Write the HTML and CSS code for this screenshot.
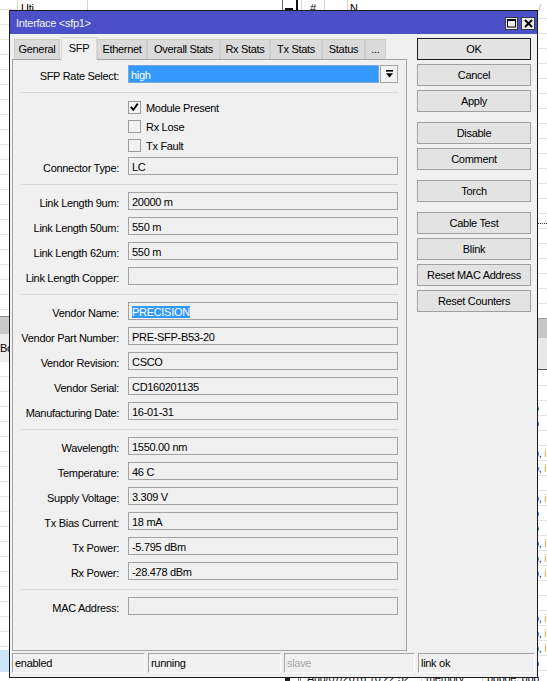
FILE: index.html
```html
<!DOCTYPE html>
<html>
<head>
<meta charset="utf-8">
<title>Interface &lt;sfp1&gt;</title>
<link rel="stylesheet" href="styles.css">
</head>
<body>
<div class="desk">

  <div class="bgwin bg-left">
    <div class="lhead">
      <div class="hc hc0"></div>
      <div class="hc hc1">Uti</div>
      <div class="hc hc2"></div>
      <div class="hc hc3"><span class="sblk"></span></div>
    </div>
    <div class="lrows lrows1"></div>
    <div class="lband"></div>
    <div class="lbo">Bo</div>
    <div class="lrows lrows2"></div>
    <div class="lsel"></div>
    <div class="lfoot"><span class="sq"></span></div>
  </div>

  <div class="bgwin bg-right">
    <div class="rhead">
      <div class="rh rh0"></div>
      <div class="rh rh1">#</div>
      <div class="rh rh2"></div>
      <div class="rh rh3">N</div>
      <div class="rh rh4">/</div>
    </div>
    <div class="rlist"></div>
    <div class="rband1"></div>
    <div class="rband2"></div>
    <div class="rlog">
      <div class="lrow"><span class="lt"></span><span class="lm"></span><span class="lx"></span><span class="ly"></span></div>
      <div class="lrow"><span class="lt"></span><span class="lm"></span><span class="lx"></span><span class="ly"></span></div>
      <div class="lrow"><span class="lt"></span><span class="lm"></span><span class="lx"></span><span class="ly">o</span></div>
      <div class="lrow"><span class="lt"></span><span class="lm"></span><span class="lx"></span><span class="ly">o</span></div>
      <div class="lrow"><span class="lt"></span><span class="lm"></span><span class="lx"></span><span class="ly"></span></div>
      <div class="lrow"><span class="lt"></span><span class="lm"></span><span class="lx"></span><span class="ly">o, <span class="or">i</span></span></div>
      <div class="lrow"><span class="lt"></span><span class="lm"></span><span class="lx"></span><span class="ly">o, <span class="or">i</span></span></div>
      <div class="lrow"><span class="lt"></span><span class="lm"></span><span class="lx"></span><span class="ly"></span></div>
      <div class="lrow"><span class="lt"></span><span class="lm"></span><span class="lx"></span><span class="ly">o, <span class="or">i</span></span></div>
      <div class="lrow"><span class="lt"></span><span class="lm"></span><span class="lx"></span><span class="ly">o</span></div>
      <div class="lrow"><span class="lt"></span><span class="lm"></span><span class="lx"></span><span class="ly">o</span></div>
      <div class="lrow"><span class="lt"></span><span class="lm"></span><span class="lx"></span><span class="ly">o, <span class="or">i</span></span></div>
      <div class="lrow"><span class="lt"></span><span class="lm"></span><span class="lx"></span><span class="ly">o, <span class="or">i</span></span></div>
      <div class="lrow"><span class="lt"></span><span class="lm"></span><span class="lx"></span><span class="ly">o, <span class="or">i</span></span></div>
      <div class="lrow"><span class="lt"></span><span class="lm"></span><span class="lx"></span><span class="ly"></span></div>
      <div class="lrow"><span class="lt"></span><span class="lm"></span><span class="lx"></span><span class="ly"></span></div>
      <div class="lrow"><span class="lt"></span><span class="lm"></span><span class="lx"></span><span class="ly">o, <span class="or">i</span></span></div>
      <div class="lrow"><span class="lt"></span><span class="lm"></span><span class="lx"></span><span class="ly">o, <span class="or">i</span></span></div>
      <div class="lrow"><span class="lt"></span><span class="lm"></span><span class="lx"></span><span class="ly">o, <span class="or">i</span></span></div>
      <div class="lrow"><span class="lt"></span><span class="lm"></span><span class="lx"></span><span class="ly">o</span></div>
      <div class="lrow"><span class="lt">Aug/07/2016 10:22:52</span><span class="lm">memory</span><span class="lx">pppoe, ppp</span><span class="ly"></span></div>
    </div>
  </div>

  <div class="win">
    <div class="titlebar">
      <span class="title">Interface &lt;sfp1&gt;</span>
      <span class="tbtn">
        <svg width="11" height="11" viewBox="0 0 11 11"><rect x="1.5" y="1.5" width="8" height="7.5" fill="none" stroke="#000" stroke-width="1"/><rect x="1" y="1" width="9" height="2" fill="#000"/></svg>
      </span>
      <span class="tbtn tclose">
        <svg width="11" height="11" viewBox="0 0 11 11"><path d="M2 2L9 9M9 2L2 9" stroke="#000" stroke-width="2" fill="none"/></svg>
      </span>
    </div>

    <div class="body">
      <div class="top">
        <div class="main">
          <div class="tabs">
            <div class="tab t-general">General</div>
            <div class="tab t-sfp active">SFP</div>
            <div class="tab t-eth">Ethernet</div>
            <div class="tab t-overall">Overall Stats</div>
            <div class="tab t-rx">Rx Stats</div>
            <div class="tab t-tx">Tx Stats</div>
            <div class="tab t-status">Status</div>
            <div class="tab t-more">...</div>
          </div>

          <div class="panel">
            <div class="row">
              <span class="lbl">SFP Rate Select:</span>
              <div class="combo">
                <div class="field sel">high</div>
                <div class="ddbtn"><svg width="9" height="9" viewBox="0 0 9 9"><rect x="1" y="0" width="7" height="1.6" fill="#000"/><path d="M1 3.2H8L4.5 7.6Z" fill="#000"/></svg></div>
              </div>
            </div>
            <div class="sep"></div>

            <div class="checks">
              <div class="chk"><span class="box"><svg width="11" height="11" viewBox="0 0 11 11"><path d="M1.8 4.8L4.3 7.8L8.8 1.6" fill="none" stroke="#000" stroke-width="1.8"/></svg></span>Module Present</div>
              <div class="chk"><span class="box"></span>Rx Lose</div>
              <div class="chk"><span class="box"></span>Tx Fault</div>
            </div>
            <div class="row"><span class="lbl">Connector Type:</span><div class="field">LC</div></div>
            <div class="sep"></div>

            <div class="row"><span class="lbl">Link Length 9um:</span><div class="field">20000 m</div></div>
            <div class="row"><span class="lbl">Link Length 50um:</span><div class="field">550 m</div></div>
            <div class="row"><span class="lbl">Link Length 62um:</span><div class="field">550 m</div></div>
            <div class="row"><span class="lbl">Link Length Copper:</span><div class="field"></div></div>
            <div class="sep"></div>

            <div class="row"><span class="lbl">Vendor Name:</span><div class="field"><span class="hl">PRECISION</span></div></div>
            <div class="row"><span class="lbl">Vendor Part Number:</span><div class="field">PRE-SFP-B53-20</div></div>
            <div class="row"><span class="lbl">Vendor Revision:</span><div class="field">CSCO</div></div>
            <div class="row"><span class="lbl">Vendor Serial:</span><div class="field">CD160201135</div></div>
            <div class="row"><span class="lbl">Manufacturing Date:</span><div class="field">16-01-31</div></div>
            <div class="sep"></div>

            <div class="row"><span class="lbl">Wavelength:</span><div class="field">1550.00 nm</div></div>
            <div class="row"><span class="lbl">Temperature:</span><div class="field">46 C</div></div>
            <div class="row"><span class="lbl">Supply Voltage:</span><div class="field">3.309 V</div></div>
            <div class="row"><span class="lbl">Tx Bias Current:</span><div class="field">18 mA</div></div>
            <div class="row"><span class="lbl">Tx Power:</span><div class="field">-5.795 dBm</div></div>
            <div class="row"><span class="lbl">Rx Power:</span><div class="field">-28.478 dBm</div></div>
            <div class="sep"></div>

            <div class="row"><span class="lbl">MAC Address:</span><div class="field"></div></div>
          </div>
        </div>

        <div class="side">
          <div class="grp">
            <div class="btn def">OK</div>
            <div class="btn">Cancel</div>
            <div class="btn">Apply</div>
          </div>
          <div class="grp">
            <div class="btn">Disable</div>
            <div class="btn">Comment</div>
          </div>
          <div class="grp">
            <div class="btn">Torch</div>
          </div>
          <div class="grp">
            <div class="btn">Cable Test</div>
            <div class="btn">Blink</div>
            <div class="btn">Reset MAC Address</div>
            <div class="btn">Reset Counters</div>
          </div>
        </div>
      </div>

      <div class="status">
        <div class="scell">enabled</div>
        <div class="scell">running</div>
        <div class="scell dim">slave</div>
        <div class="scell last">link ok</div>
      </div>
    </div>
  </div>

</div>
</body>
</html>
```

FILE: styles.css
```css
* { box-sizing: border-box; }
html, body { margin: 0; padding: 0; }
body {
  width: 547px;
  height: 681px;
  overflow: hidden;
  background: #fff;
  font-family: "Liberation Sans", Arial, sans-serif;
  font-size: 11px;
  letter-spacing: -0.3px;
  color: #000;
}
.desk {
  position: relative;
  width: 547px;
  height: 681px;
  overflow: hidden;
  background: #fff;
}

/* ---------- background windows ---------- */
.bgwin {
  position: absolute;
  top: 0;
  height: 681px;
  display: flex;
  flex-direction: column;
  background: #fff;
}
.bg-left { left: 0; width: 296px; }
.bg-right { left: 296px; width: 251px; }

.lhead { height: 10px; flex: none; display: flex; background: #fff; }
.lhead .hc {
  height: 10px;
  border-right: 1px solid #d6d6d6;
  padding: 2px 0 0 3px;
  line-height: 13px;
  white-space: nowrap;
}
.hc0 { width: 18px; border-bottom: 1px solid #e2e2e2; }
.hc1 { width: 70px; }
.hc2 { flex: 1; border-right-color: #6a6a6a !important; }
.hc3 { width: 13px; border-right: none !important; padding: 0 !important; }
.sblk { display: block; width: 8px; height: 2px; margin: 8px 0 0 2px; background: #111; }

.lrows {
  flex: none;
  background: repeating-linear-gradient(180deg, transparent 0 14px, #e4e4e4 14px 15px);
}
.lrows1 { height: 306px; }
.lband { flex: none; height: 18px; background: #c9c9c9; border-top: 1px solid #8a8a8a; }
.lbo { flex: none; height: 28px; line-height: 28px; background: #ececec; white-space: nowrap; }
.lrows2 { height: 288px; }
.lsel { flex: none; height: 22px; background: #cce4f7; }
.lfoot { flex: none; height: 9px; display: flex; justify-content: flex-end; padding-right: 6px; }
.sq { display: block; width: 5px; height: 5px; margin-top: 6px; background: #222; }

.rhead { height: 10px; flex: none; display: flex; border-left: 2px solid #111; }
.rh {
  height: 10px;
  border-right: 1px solid #d6d6d6;
  padding: 2px 0 0 3px;
  line-height: 13px;
  white-space: nowrap;
}
.rh0 { width: 4px; padding: 0; }
.rh1 { width: 23px; padding-left: 8px; }
.rh2 { width: 23px; }
.rh3 { width: 190px; border-right: none; padding-left: 2px; }
.rh4 { flex: 1; border-right: none; color: #b8b8b8; padding-left: 0; }

.rlist {
  flex: none;
  height: 308px;
  background:
    repeating-linear-gradient(90deg, #333 0 1px, transparent 1px 2px) 0 213px / 100% 1px no-repeat,
    repeating-linear-gradient(180deg, transparent 0 8px, #e4e4e4 8px 9px, transparent 9px 15px);
}
.rband1 { flex: none; height: 20px; background: #c6c6c6; border-top: 1px solid #a0a0a0; }
.rband2 { flex: none; height: 32px; background: #e9e9e9; border-bottom: 1px solid #555; }
.rlog { flex: none; display: flex; flex-direction: column; }
.lrow {
  flex: none;
  height: 15px;
  display: flex;
  margin-left: 2px;
  border-left: 3px double #8c8c8c;
  border-top: 1px solid #e4e4e4;
  line-height: 13px;
  white-space: nowrap;
  color: #111;
}
.lrow:first-child { border-top: none; }
.lt { flex: none; width: 121px; padding: 1px 0 0 6px; border-right: 1px solid #dcdcdc; }
.lm { flex: none; width: 61px; padding: 1px 0 0 4px; border-right: 1px solid #dcdcdc; }
.lx { flex: none; width: 50px; padding: 1px 0 0 4px; }
.ly { flex: none; padding: 1px 0 0 0; color: #1c2aa8; }
.or { color: #eda526; }

/* ---------- dialog window ---------- */
.win {
  position: absolute;
  left: 9px;
  top: 10px;
  width: 529px;
  height: 668px;
  border: 1px solid #1c1c1c;
  background: #f0f0f0;
  display: flex;
  flex-direction: column;
}
.titlebar {
  flex: none;
  height: 23px;
  background: #4b4fc8;
  display: flex;
  align-items: center;
  padding: 1px 2px 0 6px;
  gap: 3px;
}
.title {
  flex: 1;
  color: #f4f4f4;
  white-space: nowrap;
}
.tbtn {
  width: 13px;
  height: 13px;
  border: 1px solid #3a3a3a;
  background: #ececec;
  display: flex;
  align-items: center;
  justify-content: center;
}
.tclose { width: 14px; }

.body {
  flex: 1;
  display: flex;
  flex-direction: column;
  padding: 3px 2px 4px 2px;
}
.top { flex: none; display: flex; height: 614px; }
.main { flex: none; width: 395px; display: flex; flex-direction: column; }

.tabs {
  flex: none;
  height: 22px;
  display: flex;
  align-items: flex-end;
  padding-left: 2px;
  position: relative;
  z-index: 1;
}
.tab {
  flex: none;
  height: 20px;
  line-height: 19px;
  text-align: center;
  background: #dadada;
  border: 1px solid #cdcdcd;
  border-bottom: none;
  white-space: nowrap;
}
.tab.active {
  height: 23px;
  line-height: 20px;
  margin-left: 1px;
  margin-bottom: -1px;
  background: #f0f0f0;
  border-color: #d9d9d9;
}
.t-general { width: 46px; }
.t-sfp { width: 36px; }
.t-eth { width: 50px; }
.t-overall { width: 73px; }
.t-rx { width: 50px; }
.t-tx { width: 52px; }
.t-status { width: 43px; }
.t-more { width: 21px; }

.panel {
  flex: none;
  height: 592px;
  border: 1px solid #a3a3a3;
  background: #f0f0f0;
  padding: 5px 8px 0 0;
  display: flex;
  flex-direction: column;
}
.row {
  flex: none;
  height: 18px;
  margin-bottom: 7px;
  display: flex;
  align-items: flex-start;
}
.lbl {
  flex: none;
  width: 106px;
  margin-right: 9px;
  text-align: right;
  white-space: nowrap;
  line-height: 20px;
  padding-top: 1px;
}
.field {
  flex: none;
  width: 270px;
  height: 18px;
  border: 1px solid #a3a3a3;
  background: #f0f0f0;
  padding-left: 3px;
  line-height: 18px;
  white-space: nowrap;
}
.hl { background: #3399ff; color: #fff; }
.combo { flex: none; width: 270px; display: flex; gap: 1px; }
.field.sel {
  flex: 1;
  width: auto;
  background: #3399ff;
  border-color: #7fa9d8;
  color: #fff;
  padding-left: 2px;
}
.ddbtn {
  flex: none;
  width: 18px;
  height: 18px;
  border: 1px solid #a3a3a3;
  background: #f4f4f4;
  display: flex;
  align-items: center;
  justify-content: center;
  padding-top: 1px;
}
.sep {
  flex: none;
  height: 1px;
  background: #d9d9d9;
  margin: 2px 0 7px 8px;
}
.checks { flex: none; margin: -2px 0 2px 115px; }
.chk {
  height: 19px;
  display: flex;
  align-items: center;
  white-space: nowrap;
}
.box {
  flex: none;
  width: 13px;
  height: 13px;
  border: 1px solid #9a9a9a;
  background: #f2f2f2;
  margin-right: 5px;
  display: flex;
  align-items: center;
  justify-content: center;
}

.side {
  flex: none;
  width: 114px;
  margin: 1px 0 0 10px;
  display: flex;
  flex-direction: column;
  gap: 10px;
}
.grp { display: flex; flex-direction: column; gap: 4px; }
.btn {
  height: 22px;
  border: 1px solid #a0a0a0;
  background: #e3e3e3;
  text-align: center;
  line-height: 20px;
  white-space: nowrap;
}
.btn.def { border-color: #1e1e1e; }

.status {
  flex: none;
  height: 20px;
  margin-top: 2px;
  display: flex;
  gap: 3px;
}
.scell {
  flex: none;
  width: 133px;
  height: 20px;
  border-top: 1px solid #a3a3a3;
  border-left: 1px solid #a3a3a3;
  border-right: 1px solid #fbfbfb;
  border-bottom: 1px solid #fbfbfb;
  padding: 0 0 0 2px;
  line-height: 18px;
  white-space: nowrap;
}
.scell:nth-child(3) { width: 131px; }
.scell.last { flex: 1; width: auto; }
.scell.dim { color: #a6a6a6; }
```
